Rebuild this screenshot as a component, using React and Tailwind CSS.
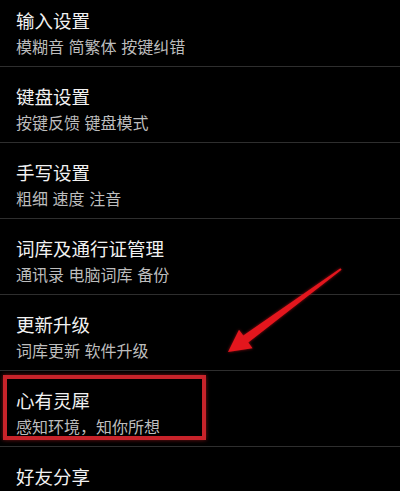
import React from "react";

const items = [
  { title: "输入设置", sub: "模糊音 简繁体 按键纠错" },
  { title: "键盘设置", sub: "按键反馈 键盘模式" },
  { title: "手写设置", sub: "粗细 速度 注音" },
  { title: "词库及通行证管理", sub: "通讯录 电脑词库 备份" },
  { title: "更新升级", sub: "词库更新 软件升级" },
  { title: "心有灵犀", sub: "感知环境，知你所想" },
  { title: "好友分享", sub: "" },
];

function Row({ title, sub }) {
  return (
    <div className="border-b border-[#2e2e2e] pl-4 pt-[17px] pb-[10px]">
      <div className="text-[18.5px] leading-6 text-[#f2f2f2]">{title}</div>
      {sub && (
        <div className="mt-1 text-[16px] leading-5 text-[#bdbdbd] [word-spacing:1px]">{sub}</div>
      )}
    </div>
  );
}

export default function App() {
  return (
    <div
      className="relative h-[491px] w-[400px] overflow-hidden bg-black"
      style={{ fontFamily: '"Noto Sans CJK SC", "Noto Sans", sans-serif' }}
    >
      <div className="-mt-[9px]">
        {items.map((it) => (
          <Row key={it.title} {...it} />
        ))}
      </div>

      {/* red highlight box */}
      <div className="pointer-events-none absolute left-[3px] top-[375px] h-[65px] w-[203px] border-4 border-[#c8232a] shadow-[0_0_4px_rgba(200,30,35,0.6)]" />

      {/* red arrow */}
      <svg
        className="pointer-events-none absolute inset-0"
        width="400"
        height="491"
        viewBox="0 0 400 491"
      >
        <polygon
          points="341.6,269.8 248.3,342.4 252.6,348.3 228,352 239,329.8 243.3,335.6 340.4,268.2"
          fill="#e3161d"
          style={{ filter: "drop-shadow(0 0 1.5px rgba(220,20,30,0.7))" }}
        />
      </svg>
    </div>
  );
}
